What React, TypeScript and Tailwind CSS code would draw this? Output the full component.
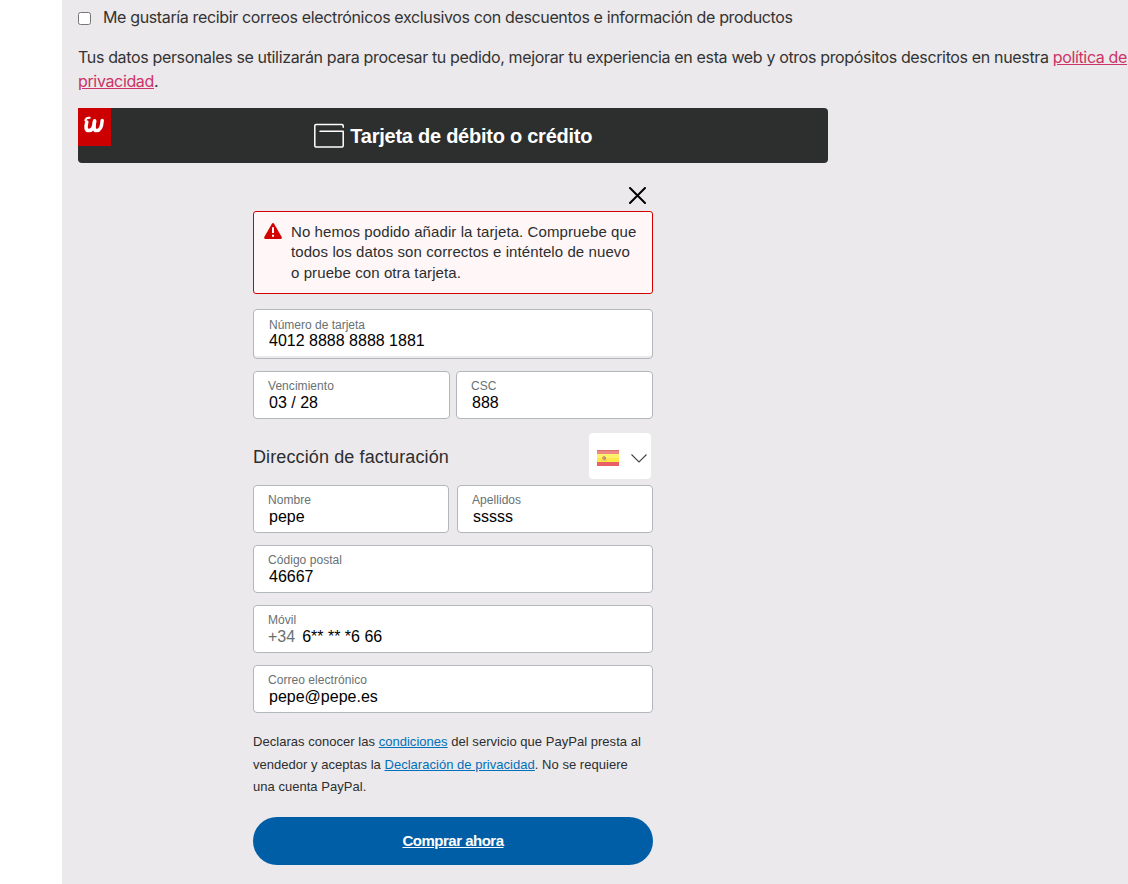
import type { ReactNode } from "react";

type FieldProps = {
  label: string;
  value: string;
  prefix?: string;
};

function Field({ label, value, prefix }: FieldProps) {
  return (
    <div className="h-12 min-w-0 flex-1 rounded-[4px] border border-[#b2b7bc] bg-white pl-3.5 pt-[6px]">
      <div className="text-[12px] leading-4 tracking-[0.05px] text-[#687173]">{label}</div>
      <div className="flex gap-[7px] text-[16px] leading-[18px] text-black">
        {prefix && <span className="text-[#687173]">{prefix}</span>}
        <span className={prefix ? "" : "ml-px"}>{value}</span>
      </div>
    </div>
  );
}

function CardIcon() {
  return (
    <svg width="30" height="25" viewBox="0 0 30 25" fill="none" stroke="#fff" strokeWidth="1.5" strokeLinecap="round" strokeLinejoin="round">
      <path d="M29.2 4.2V2.7Q29.2 1.500 28 1.500H2Q0.8 1.500 0.8 2.700V22.8Q0.8 24 2 24H28Q29.2 24 29.2 22.8V8.3H6" />
    </svg>
  );
}

function WarningIcon() {
  return (
    <svg width="18" height="16" viewBox="0 0 18 16" className="mt-[11px] shrink-0">
      <path d="M7.9.7Q9-.6 10.1.7L17.7 14Q18.2 16 16.5 16H1.5Q-.2 16 .3 14Z" fill="#d20000" />
      <path d="M8 4.3h2V10H8zM8 11.8h2v2H8z" fill="#fff" />
    </svg>
  );
}

function SpainFlag() {
  return (
    <svg width="22" height="16" viewBox="0 0 22 16" shapeRendering="crispEdges">
      <path d="M0 0h22v4H0z" fill="#ee8a86" />
      <path d="M0 0h22v1H0z" fill="#e0706f" />
      <path d="M0 4h22v8H0z" fill="#fdf06a" />
      <path d="M0 8h22v4H0z" fill="#fbe94a" />
      <path d="M0 12h22v4H0z" fill="#ea5f66" />
      <path d="M6 6h2v1h1v3H6V9H5V7h1z" fill="#e59a62" />
      <path d="M7 7h2v2H7z" fill="#b08a92" />
      <path d="M4 10h6v1H4z" fill="#efcf5a" />
    </svg>
  );
}

function Link({ children }: { children: ReactNode }) {
  return (
    <a href="#" className="text-[#0070ba] underline">
      {children}
    </a>
  );
}

export default function App() {
  return (
    <div className="h-[884px] overflow-hidden bg-white pl-[62px]">
      <main className="h-full bg-[#ebe9eb] pl-4 font-['Liberation_Sans',Arial,sans-serif]">
        <div className="h-[108px] font-['Inter',sans-serif] text-[16px] leading-6 text-[#333]">
          <label className="flex items-center pt-[5px]">
            <input type="checkbox" className="mt-0.5 size-[13px] appearance-none rounded-[2.5px] border border-[#767676] bg-white" />
            <span className="ml-3 whitespace-nowrap tracking-[-0.36px]">
              Me gustaría recibir correos electrónicos exclusivos con descuentos e información de productos
            </span>
          </label>
          <p className="mt-4 whitespace-nowrap tracking-[-0.35px]">
            Tus datos personales se utilizarán para procesar tu pedido, mejorar tu experiencia en esta web y otros propósitos descritos en nuestra{" "}
            <a href="#" className="text-[#cc3366] underline">
              política de
              <br />
              privacidad
            </a>
            .
          </p>
        </div>

        <div className="w-[750px]">
          <div className="relative flex h-[55px] items-center justify-center rounded-[4px] bg-[#2c2f2e] text-white">
            <div className="absolute left-0 top-0 h-[38px] w-[33px] bg-[#cc0000]">
              <svg width="33" height="38" viewBox="0 0 33 38" fill="none" stroke="#fff" strokeLinecap="round" strokeLinejoin="round">
                <path d="M8.800 14C7.500 19.500 7.600 22.600 10.800 22.600C14.300 22.600 16 20 16.600 13" strokeWidth="3.500" />
                <path d="M16.600 13C15.800 19.500 15.600 22.600 18.600 22.600C22.300 22.600 23.800 19.500 24.200 12.500" strokeWidth="3.500" />
                <path d="M7.300 12.300C8 9.800 9.500 9.500 11.700 9.700" strokeWidth="2" />
              </svg>
            </div>
            <CardIcon />
            <span className="ml-[6.5px] whitespace-nowrap text-[20px] font-bold tracking-[-0.25px]">Tarjeta de débito o crédito</span>
          </div>

          <form className="mx-auto w-[400px]">
            <div className="flex h-12 justify-end pr-[7px] pt-6">
              <svg width="17" height="17" viewBox="0 0 17 17" stroke="#000" strokeWidth="2" strokeLinecap="round">
                <path d="M1 1l15 15M16 1L1 16" />
              </svg>
            </div>

            <div className="flex h-[83px] rounded-[3px] border border-[#d20000] bg-[#fff7f7] pl-2.5">
              <WarningIcon />
              <p className="ml-[9px] whitespace-nowrap pt-[9.8px] text-[15px] leading-[20.4px] tracking-[0.09px] text-[#2c2e2f]">
                No hemos podido añadir la tarjeta. Compruebe que
                <br />
                todos los datos son correctos e inténtelo de nuevo
                <br />o pruebe con otra tarjeta.
              </p>
            </div>

            <div className="mt-[15px] h-[50px] rounded-[4px] border border-[#b2b7bc] bg-white pl-[15px] pt-[7px] shadow-[inset_0_-2px_0_#ebe9eb]">
              <div className="text-[12px] leading-4 text-[#687173]">Número de tarjeta</div>
              <div className="text-[16px] leading-4 text-black">4012 8888 8888 1881</div>
            </div>
            <div className="mt-3 flex gap-1.5">
              <Field label="Vencimiento" value="03 / 28" />
              <Field label="CSC" value="888" />
            </div>

            <div className="mt-3.5 flex h-[46px] items-center justify-between pr-0.5">
              <h2 className="pt-0.5 text-[18px] tracking-[0.12px] text-[#2c2e2f]">Dirección de facturación</h2>
              <button type="button" className="flex h-[46px] w-[62px] items-center rounded-[4px] bg-white pl-2 pt-[3px]">
                <SpainFlag />
                <svg width="16" height="10" viewBox="0 0 16 10" fill="none" stroke="#444" strokeWidth="1.1" className="ml-3 mt-px">
                  <path d="M.5 1.500L8 9L15.500 1.500" />
                </svg>
              </button>
            </div>

            <div className="mt-1.5 flex flex-col gap-3">
              <div className="flex gap-2">
                <Field label="Nombre" value="pepe" />
                <Field label="Apellidos" value="sssss" />
              </div>
              <div className="flex">
                <Field label="Código postal" value="46667" />
              </div>
              <div className="flex">
                <Field label="Móvil" prefix="+34" value="6** ** *6 66" />
              </div>
              <div className="flex">
                <Field label="Correo electrónico" value="pepe@pepe.es" />
              </div>
            </div>

            <p className="mt-[18px] whitespace-nowrap text-[13px] leading-[22.5px] tracking-[0.03px] text-[#2c2e2f]">
              Declaras conocer las <Link>condiciones</Link> del servicio que PayPal presta al
              <br />
              vendedor y aceptas la <Link>Declaración de privacidad</Link>. No se requiere
              <br />
              una cuenta PayPal.
            </p>

            <button type="button" className="mt-[18.5px] block h-12 w-full rounded-full bg-[#005ea6] text-[15px] font-bold tracking-[-0.5px] text-white underline">
              Comprar ahora
            </button>
          </form>
        </div>
      </main>
    </div>
  );
}
